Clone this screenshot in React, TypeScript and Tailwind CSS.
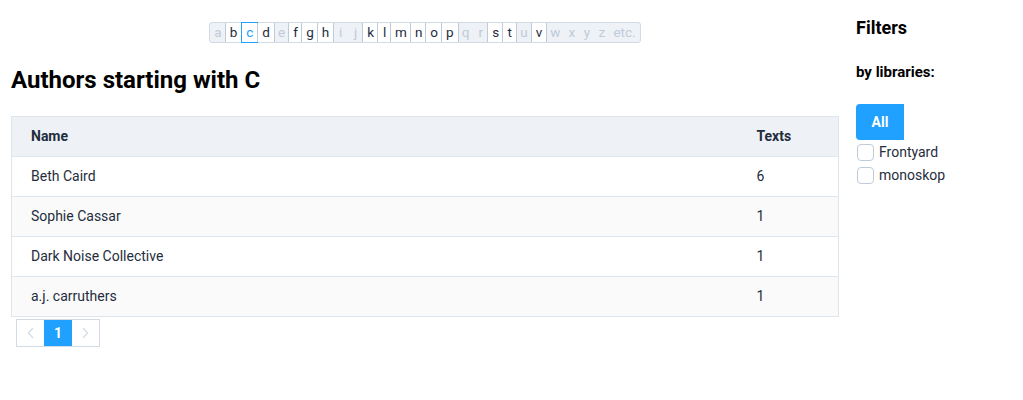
import React from 'react';

const letters = [
  { l: 'a', on: false },
  { l: 'b', on: true },
  { l: 'c', on: true, active: true },
  { l: 'd', on: true },
  { l: 'e', on: false },
  { l: 'f', on: true },
  { l: 'g', on: true },
  { l: 'h', on: true },
  { l: 'i', on: false },
  { l: 'j', on: false },
  { l: 'k', on: true },
  { l: 'l', on: true },
  { l: 'm', on: true },
  { l: 'n', on: true },
  { l: 'o', on: true },
  { l: 'p', on: true },
  { l: 'q', on: false },
  { l: 'r', on: false },
  { l: 's', on: true },
  { l: 't', on: true },
  { l: 'u', on: false },
  { l: 'v', on: true },
  { l: 'w', on: false },
  { l: 'x', on: false },
  { l: 'y', on: false },
  { l: 'z', on: false },
  { l: 'etc.', on: false },
];

const authors = [
  { name: 'Beth Caird', texts: 6 },
  { name: 'Sophie Cassar', texts: 1 },
  { name: 'Dark Noise Collective', texts: 1 },
  { name: 'a.j. carruthers', texts: 1 },
];

const LetterBar: React.FC = () => (
  <div className="flex justify-center">
    <div className="flex h-[21px] rounded-[3px] border border-[#d1dbe5] bg-[#eef1f6] text-[13.5px] leading-[19px]">
      {letters.map(({ l, on, active }) => {
        let cls = 'px-[4px] text-[#bfcbd9]';
        if (on) cls = 'px-[4px] bg-white text-[#1f2d3d] border-x border-[#bfcbd9] -mx-px first:mx-0';
        if (active) cls = 'px-[4px] bg-white text-[#20a0ff] border border-[#20a0ff] -my-px';
        return (
          <span key={l} className={`min-w-[15px] text-center ${cls}`}>
            {l}
          </span>
        );
      })}
    </div>
  </div>
);

const App: React.FC = () => {
  return (
    <div className="flex h-[400px] w-[1023px] bg-white font-['Roboto',sans-serif] text-[#1f2d3d]">
      <main className="ml-[11px] w-[828px] pt-[22px]">
        <LetterBar />
        <h1 className="mt-[20px] text-[24px] font-bold leading-[34px] text-black">Authors starting with C</h1>
        <table className="mt-[19px] w-full border border-[#dfe6ec] text-[14px]">
          <thead>
            <tr className="h-[40px] bg-[#eef1f6] text-left text-[14px] font-bold">
              <th className="pl-[19px]">Name</th>
              <th className="w-[101px] pl-[19px]">Texts</th>
            </tr>
          </thead>
          <tbody>
            {authors.map((a, i) => (
              <tr key={a.name} className={`h-[40px] border-t border-[#dfe6ec] ${i % 2 ? 'bg-[#fafafa]' : 'bg-white'}`}>
                <td className="pl-[19px]">{a.name}</td>
                <td className="pl-[19px]">{a.texts}</td>
              </tr>
            ))}
          </tbody>
        </table>
        <div className="ml-[5px] mt-[2px] flex h-[28px] w-[84px] border border-[#d1dbe5] text-[14px]">
          <span className="flex w-[28px] items-center justify-center text-[#d1dbe5]">
            <svg width="8" height="12" viewBox="0 0 8 12" fill="none" stroke="currentColor" strokeWidth="1.2">
              <path d="M6 1 1.5 6 6 11" />
            </svg>
          </span>
          <span className="flex w-[28px] items-center justify-center bg-[#20a0ff] font-bold text-white">1</span>
          <span className="flex w-[28px] items-center justify-center text-[#d1dbe5]">
            <svg width="8" height="12" viewBox="0 0 8 12" fill="none" stroke="currentColor" strokeWidth="1.2">
              <path d="M2 1 6.5 6 2 11" />
            </svg>
          </span>
        </div>
      </main>
      <aside className="ml-[17px] pt-[16px]">
        <h2 className="text-[18px] font-bold leading-[24px] text-black">Filters</h2>
        <h3 className="mt-[22px] text-[15px] font-bold leading-[20px] text-black">by libraries:</h3>
        <button className="mt-[22px] flex h-[36px] w-[48px] items-center justify-center rounded-l-[4px] bg-[#20a0ff] text-[14px] font-bold text-white">
          All
        </button>
        <div className="mt-[4px] flex flex-col gap-[6px] text-[14px] text-[#1f2d3d]">
          {['Frontyard', 'monoskop'].map((name) => (
            <label key={name} className="flex h-[17px] items-center gap-[5px]">
              <span className="ml-px h-[17px] w-[17px] rounded-[4px] border border-[#bfcbd9] bg-white" />
              {name}
            </label>
          ))}
        </div>
      </aside>
    </div>
  );
};

export default App;
